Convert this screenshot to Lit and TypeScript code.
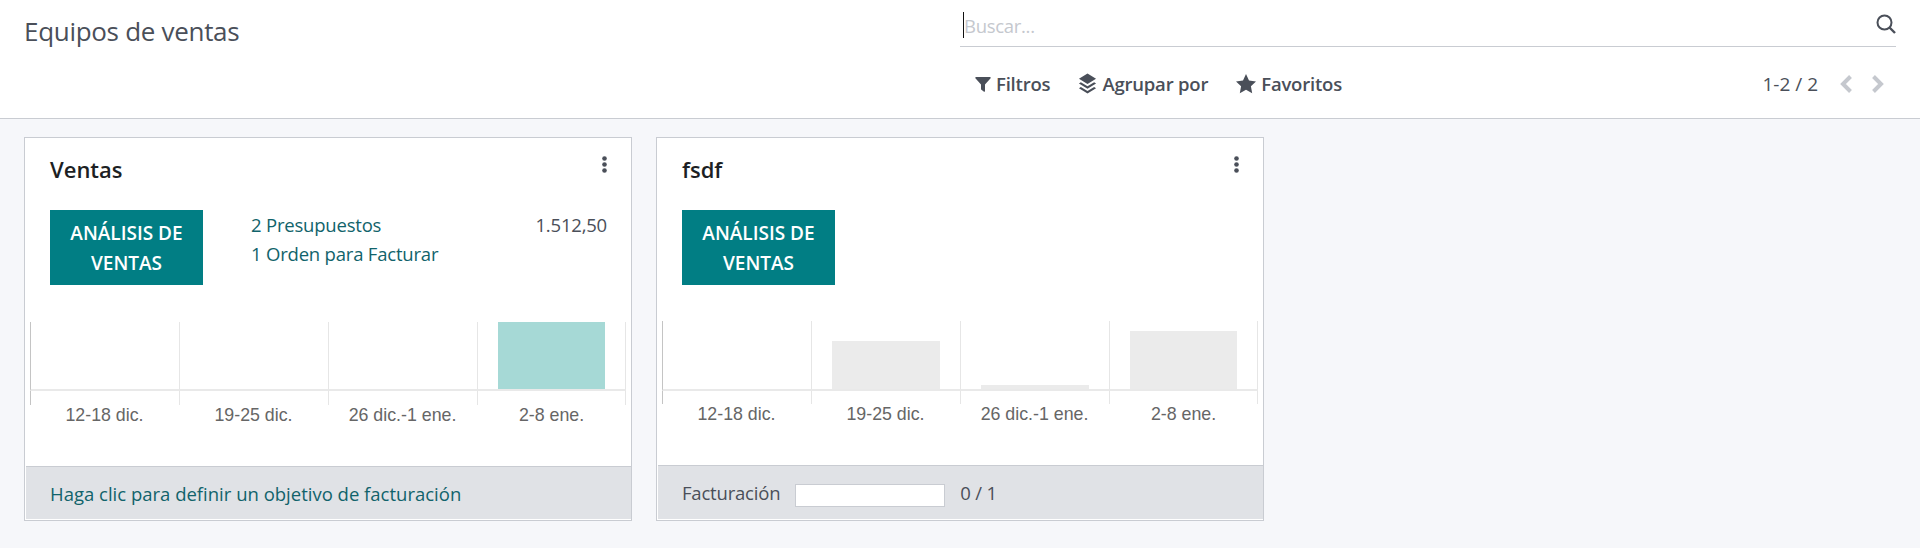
import { LitElement, html, css, svg } from "lit";
import { customElement } from "lit/decorators.js";

type Week = { label: string; value: number };
type Team = {
  name: string;
  active: boolean;
  rows: { link: string; amount?: string }[];
  weeks: Week[];
};

const TEAMS: Team[] = [
  {
    name: "Ventas",
    active: true,
    rows: [
      { link: "2 Presupuestos", amount: "1.512,50" },
      { link: "1 Orden para Facturar" },
    ],
    weeks: [
      { label: "12-18 dic.", value: 0 },
      { label: "19-25 dic.", value: 0 },
      { label: "26 dic.-1 ene.", value: 0 },
      { label: "2-8 ene.", value: 67 },
    ],
  },
  {
    name: "fsdf",
    active: false,
    rows: [],
    weeks: [
      { label: "12-18 dic.", value: 0 },
      { label: "19-25 dic.", value: 48 },
      { label: "26 dic.-1 ene.", value: 4 },
      { label: "2-8 ene.", value: 58 },
    ],
  },
];

const funnel = svg`<path d="M1 1h14a.8.8 0 0 1 .6 1.3L10 8.6V15a.8.8 0 0 1-1.3.6l-2.3-1.9a1 1 0 0 1-.4-.7V8.6L.4 2.3A.8.8 0 0 1 1 1z" fill="currentColor"/>`;
const layers = svg`<path d="M10 0l9 5.5L10 11 1 5.5z" fill="currentColor"/><path d="M3 9.2L1 10.5 10 16l9-5.5-2-1.3-7 4.3z" fill="currentColor"/><path d="M3 14.2L1 15.5 10 21l9-5.5-2-1.3-7 4.3z" fill="currentColor"/>`;
const star = svg`<path d="M10 0l3 6.5 7 .9-5.1 4.9 1.3 7L10 15.8l-6.2 3.5 1.3-7L0 7.4l7-.9z" fill="currentColor"/>`;

@customElement("app-root")
export class AppRoot extends LitElement {
  static styles = css`
    :host {
      display: block;
      height: 548px;
      background: #f6f7fa;
      font-family: "Open Sans", "Noto Sans", sans-serif;
      color: #4a4f59;
      overflow: hidden;
    }
    .control {
      height: 118px;
      box-sizing: content-box;
      background: #fff;
      border-bottom: 1px solid #c9ccd2;
      display: grid;
      grid-template-columns: 960px 936px;
    }
    .title {
      margin: 13px 0 0 24px;
      font-size: 26px;
      line-height: 36px;
      letter-spacing: -0.3px;
      font-weight: 400;
    }
    .search {
      height: 46px;
      border-bottom: 1px solid #c9ccd2;
      display: flex;
      align-items: flex-start;
      justify-content: space-between;
      padding-left: 3px;
      box-sizing: content-box;
    }
    .caret {
      width: 1px;
      height: 26px;
      margin-top: 12px;
      background: #111;
      flex: none;
    }
    .placeholder {
      flex: 1;
      color: #c5c8ce;
      font-size: 18.5px;
      line-height: 30px;
      margin-top: 11px;
      letter-spacing: -0.3px;
    }
    .search svg {
      margin-top: 14px;
    }
    .tools {
      display: flex;
      align-items: center;
      justify-content: space-between;
      height: 69px;
      padding: 2px 12px 0 15px;
    }
    .filters,
    .pager,
    .filter {
      display: flex;
      align-items: center;
    }
    .filters {
      gap: 28px;
    }
    .filter {
      gap: 5px;
      font-size: 18.5px;
      font-weight: 600;
      letter-spacing: -0.2px;
    }
    .pager {
      font-size: 19px;
    }
    .pager .arrows {
      display: flex;
      gap: 20px;
      margin-left: 22px;
      color: #c5c8ce;
    }
    .board {
      display: flex;
      gap: 24px;
      padding: 18px 24px 0;
    }
    .card {
      width: 608px;
      height: 384px;
      box-sizing: border-box;
      background: #fff;
      border: 1px solid #c9ccd2;
      display: flex;
      flex-direction: column;
      position: relative;
    }
    .name {
      margin: 15px 0 0 25px;
      font-size: 22px;
      line-height: 32px;
      font-weight: 600;
      color: #1d1f24;
    }
    .more {
      position: absolute;
      top: 18px;
      right: 23px;
      width: 7px;
      height: 17px;
    }
    .body {
      display: flex;
      margin: 25px 0 0 25px;
      height: 75px;
    }
    .action {
      width: 153px;
      height: 75px;
      flex: none;
      box-sizing: border-box;
      background: #017e84;
      color: #fff;
      border: 0;
      padding: 0 12px;
      font: 600 19px/30px "Open Sans", "Noto Sans", sans-serif;
      text-align: center;
    }
    .rows {
      flex: 1;
      margin: 0 24px 0 48px;
    }
    .row {
      display: flex;
      justify-content: space-between;
      font-size: 18.5px;
      line-height: 29px;
      letter-spacing: -0.2px;
    }
    .row a {
      color: #11636b;
      text-decoration: none;
    }
    .chart {
      display: grid;
      grid-template-columns: repeat(4, 149px);
      margin: 37px 0 0 5px;
    }
    .card.muted .chart {
      margin-top: 36px;
    }
    .week {
      display: flex;
      flex-direction: column;
    }
    .plot {
      height: 67px;
      padding: 0 20px;
      display: flex;
      align-items: flex-end;
      border-left: 1px solid #e6e6e6;
      border-bottom: 2px solid #e9e9e9;
    }
    .card.muted .plot {
      height: 68px;
    }
    .tick {
      height: 14px;
      border-left: 1px solid #e6e6e6;
    }
    .card.muted .tick {
      height: 13px;
    }
    .week:first-child .plot,
    .week:first-child .tick {
      border-left-color: #c4c4c4;
    }
    .week:last-child .plot,
    .week:last-child .tick {
      border-right: 1px solid #e6e6e6;
    }
    .bar {
      flex: 1;
      background: #ebebeb;
    }
    .card.active .bar {
      background: #a6d9d6;
    }
    .label {
      text-align: center;
      font: 17.8px/20px "Liberation Sans", Arial, sans-serif;
      color: #666;
    }
    .foot {
      margin: auto 0 1px 1px;
      height: 53px;
      box-sizing: border-box;
      background: #e0e2e6;
      border-top: 1px solid #c9ccd2;
      padding: 1px 24px 0;
      display: flex;
      align-items: center;
      font-size: 18.5px;
    }
    .card.muted .foot {
      height: 54px;
      padding-top: 0;
      letter-spacing: -0.2px;
    }
    .foot a {
      color: #11636b;
      text-decoration: none;
    }
    .progress {
      width: 150px;
      height: 23px;
      box-sizing: border-box;
      background: #fff;
      border: 1px solid #c9ccd2;
      margin: 6px 15px 0;
    }
  `;

  private renderTeam(t: Team) {
    return html`
      <section class="card ${t.active ? "active" : "muted"}">
        <div class="name">${t.name}</div>
        <svg class="more" viewBox="0 0 7 17">
          <circle cx="3.5" cy="2.5" r="2.3" fill="#4a4f59" />
          <circle cx="3.5" cy="8.5" r="2.3" fill="#4a4f59" />
          <circle cx="3.5" cy="14.5" r="2.3" fill="#4a4f59" />
        </svg>
        <div class="body">
          <button class="action">ANÁLISIS DE VENTAS</button>
          <div class="rows">
            ${t.rows.map(
              (r) => html`<div class="row">
                <a href="#">${r.link}</a><span>${r.amount ?? ""}</span>
              </div>`
            )}
          </div>
        </div>
        <div class="chart">
          ${t.weeks.map(
            (w) => html`<div class="week">
              <div class="plot">
                <div class="bar" style="height:${w.value}px"></div>
              </div>
              <div class="tick"></div>
              <div class="label">${w.label}</div>
            </div>`
          )}
        </div>
        <div class="foot">
          ${t.active
            ? html`<a href="#">Haga clic para definir un objetivo de facturación</a>`
            : html`<span>Facturación</span>
                <div class="progress"></div>
                <span>0 / 1</span>`}
        </div>
      </section>
    `;
  }

  render() {
    return html`
      <header class="control">
        <div class="title">Equipos de ventas</div>
        <div>
          <div class="search">
            <span class="caret"></span>
            <span class="placeholder">Buscar...</span>
            <svg width="20" height="20" viewBox="0 0 20 20" fill="none" stroke="currentColor">
              <circle cx="8.5" cy="8.5" r="7" stroke-width="2" />
              <path d="M13.5 13.5L19 19" stroke-width="2.4" />
            </svg>
          </div>
          <div class="tools">
            <div class="filters">
              <div class="filter">
                <svg width="16" height="16" viewBox="0 0 16 16">${funnel}</svg>Filtros
              </div>
              <div class="filter">
                <svg width="19" height="21" viewBox="0 0 20 21">${layers}</svg>Agrupar por
              </div>
              <div class="filter">
                <svg width="20" height="20" viewBox="0 0 20 20">${star}</svg>Favoritos
              </div>
            </div>
            <div class="pager">
              1-2 / 2
              <div class="arrows">
                <svg width="12" height="18" viewBox="0 0 12 18" fill="none" stroke="currentColor" stroke-width="4">
                  <path d="M10.5 1.5L3 9l7.5 7.5" />
                </svg>
                <svg width="12" height="18" viewBox="0 0 12 18" fill="none" stroke="currentColor" stroke-width="4">
                  <path d="M1.5 1.5L9 9l-7.5 7.5" />
                </svg>
              </div>
            </div>
          </div>
        </div>
      </header>
      <main class="board">${TEAMS.map((t) => this.renderTeam(t))}</main>
    `;
  }
}
